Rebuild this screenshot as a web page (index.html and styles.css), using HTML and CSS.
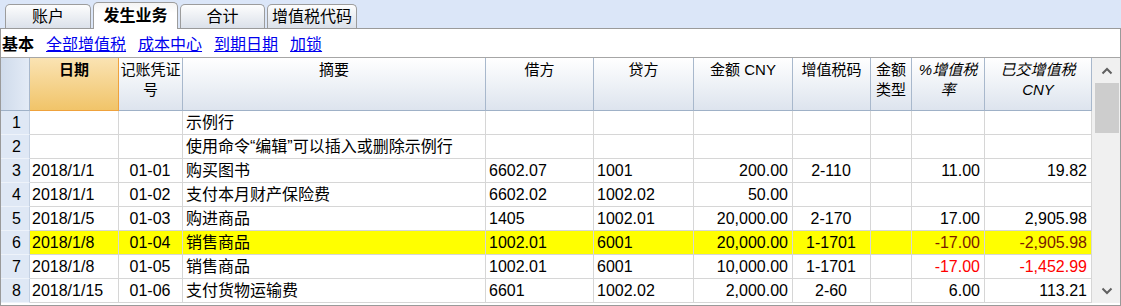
FILE: index.html
```html
<!DOCTYPE html>
<html lang="zh">
<head>
  <meta charset="UTF-8" />
  <title>发生业务</title>
  <link rel="stylesheet" href="styles.css">
</head>
<body>
  <div class="tabbar">
    <div class="tab tab-1">账户</div>
    <div class="tab tab-2 active">发生业务</div>
    <div class="tab tab-3">合计</div>
    <div class="tab tab-4">增值税代码</div>
  </div>

  <div class="panel">
    <div class="toolbar">
      <b>基本</b>
      <a href="#">全部增值税</a>
      <a href="#">成本中心</a>
      <a href="#">到期日期</a>
      <a href="#">加锁</a>
    </div>

    <div class="gridbox">
      <table class="grid">
        <thead>
          <tr>
            <th class="num w-num"></th>
            <th class="sel w-date"><b>日期</b></th>
            <th class="w-doc">记账凭证<br>号</th>
            <th class="w-desc">摘要</th>
            <th class="w-debit">借方</th>
            <th class="w-credit">贷方</th>
            <th class="w-amount">金额 CNY</th>
            <th class="w-code">增值税码</th>
            <th class="w-type">金额<br>类型</th>
            <th class="w-rate"><i>%增值税<br>率</i></th>
            <th class="w-vat"><i>已交增值税<br>CNY</i></th>
          </tr>
        </thead>
        <tbody>
          <tr>
            <td class="num">1</td><td></td><td></td><td>示例行</td>
            <td></td><td></td><td></td><td></td><td></td><td></td><td></td>
          </tr>
          <tr>
            <td class="num">2</td><td></td><td></td><td>使用命令“编辑”可以插入或删除示例行</td>
            <td></td><td></td><td></td><td></td><td></td><td></td><td></td>
          </tr>
          <tr>
            <td class="num">3</td><td>2018/1/1</td><td class="c">01-01</td><td>购买图书</td>
            <td>6602.07</td><td>1001</td><td class="r">200.00</td><td class="c">2-110</td><td></td>
            <td class="r">11.00</td><td class="r">19.82</td>
          </tr>
          <tr>
            <td class="num">4</td><td>2018/1/1</td><td class="c">01-02</td><td>支付本月财产保险费</td>
            <td>6602.02</td><td>1002.02</td><td class="r">50.00</td><td></td><td></td>
            <td></td><td></td>
          </tr>
          <tr>
            <td class="num">5</td><td>2018/1/5</td><td class="c">01-03</td><td>购进商品</td>
            <td>1405</td><td>1002.01</td><td class="r">20,000.00</td><td class="c">2-170</td><td></td>
            <td class="r">17.00</td><td class="r">2,905.98</td>
          </tr>
          <tr class="current">
            <td class="num">6</td><td>2018/1/8</td><td class="c">01-04</td><td>销售商品</td>
            <td>1002.01</td><td>6001</td><td class="r">20,000.00</td><td class="c">1-1701</td><td></td>
            <td class="r neg">-17.00</td><td class="r neg">-2,905.98</td>
          </tr>
          <tr>
            <td class="num">7</td><td>2018/1/8</td><td class="c">01-05</td><td>销售商品</td>
            <td>1002.01</td><td>6001</td><td class="r">10,000.00</td><td class="c">1-1701</td><td></td>
            <td class="r neg">-17.00</td><td class="r neg">-1,452.99</td>
          </tr>
          <tr>
            <td class="num">8</td><td>2018/1/15</td><td class="c">01-06</td><td>支付货物运输费</td>
            <td>6601</td><td>1002.02</td><td class="r">2,000.00</td><td class="c">2-60</td><td></td>
            <td class="r">6.00</td><td class="r">113.21</td>
          </tr>
        </tbody>
      </table>

      <div class="vscroll">
        <div class="arrow">
          <svg width="12" height="8" viewBox="0 0 12 8"><polyline points="1.5,6.5 6,2 10.5,6.5" fill="none" stroke="#606060" stroke-width="2"/></svg>
        </div>
        <div class="thumb"></div>
        <div class="track"></div>
        <div class="arrow">
          <svg width="12" height="8" viewBox="0 0 12 8"><polyline points="1.5,1.5 6,6 10.5,1.5" fill="none" stroke="#606060" stroke-width="2"/></svg>
        </div>
      </div>
    </div>
  </div>
</body>
</html>
```

FILE: styles.css
```css
* {
  box-sizing: border-box;
}
body {
  margin: 0;
  width: 1121px;
  height: 306px;
  overflow: hidden;
  background: #fff;
  color: #000;
  font-family: "Liberation Sans", "Noto Sans CJK SC", sans-serif;
  font-size: 16px;
}

/* tabs */
.tabbar {
  height: 28px;
  background: #dbe6f8;
  display: flex;
  align-items: flex-end;
  gap: 2px;
  padding-left: 5px;
}
.tab {
  height: 24px;
  border: 1px solid #9c9c9c;
  border-bottom: none;
  border-radius: 5px 5px 0 0;
  background: linear-gradient(#fdfdfd, #dbe1ea);
  text-align: center;
  line-height: 23px;
}
.tab-1 { width: 86px; }
.tab-2 { width: 85px; }
.tab-3 { width: 85px; }
.tab-4 { width: 90px; }
.tab.active {
  height: 27px;
  margin-bottom: -1px;
  position: relative;
  z-index: 1;
  background: linear-gradient(#f4f4f4, #ffffff 40%);
  font-weight: bold;
  line-height: 25px;
}

/* panel */
.panel {
  height: 278px;
  border: 1px solid #9a9a9a;
  display: flex;
  flex-direction: column;
}
.toolbar {
  height: 28px;
  display: flex;
  align-items: center;
  gap: 12px;
  padding-left: 1px;
}
.toolbar a {
  color: #0000ee;
  text-decoration: underline;
}

.gridbox {
  display: flex;
  border-top: 1px solid #a6a6a6;
}

/* grid */
.grid {
  width: 1091px;
  table-layout: fixed;
  border-collapse: separate;
  border-spacing: 0;
}
.grid th,
.grid td {
  border-right: 1px solid #d6d6d6;
  border-bottom: 1px solid #d6d6d6;
  white-space: nowrap;
  overflow: hidden;
}
.grid th {
  height: 53px;
  padding: 2px 0 0;
  vertical-align: top;
  font-size: 15px;
  font-weight: normal;
  line-height: 20px;
  text-align: center;
  background: linear-gradient(#ffffff, #dde4ee);
  border-right-color: #a8b8cc;
  border-bottom-color: #9fb1c7;
}
.grid th.sel {
  background: linear-gradient(#fae3b3, #f1c469);
  border-right-color: #efa23c;
  border-bottom-color: #efa23c;
}
.grid th.num {
  background: linear-gradient(90deg, #cfdbeb, #e3ebf6);
}
.grid td {
  height: 24px;
  padding: 0 4px 0 3px;
  line-height: 23px;
}
.grid td:nth-child(2) {
  padding-left: 2px;
}
.grid td.num {
  padding-left: 11px;
  background: #dfe8f5;
  border-right-color: #c3d0e2;
  border-bottom-color: #eef3fa;
}
.grid td.c { text-align: center; }
.grid td.r { text-align: right; }
.grid td.neg { color: #ff0000; }

.grid tr.current td:not(.num) {
  background: #ffff00;
}
.grid tr.current td.neg {
  color: #7a1a00;
}

.w-num { width: 29px; }
.w-date { width: 89px; }
.w-doc { width: 64px; }
.w-desc { width: 303px; }
.w-debit { width: 108px; }
.w-credit { width: 100px; }
.w-amount { width: 99px; }
.w-code { width: 78px; }
.w-type { width: 41px; }
.w-rate { width: 73px; }
.w-vat { width: 107px; }

/* scrollbar */
.vscroll {
  width: 28px;
  height: 245px;
  background: #f0f0f0;
  display: flex;
  flex-direction: column;
  align-items: center;
}
.arrow {
  height: 25px;
  width: 100%;
  display: flex;
  align-items: center;
  justify-content: center;
  padding-left: 1px;
}
.thumb {
  width: 24px;
  height: 50px;
  margin-left: 1px;
  background: #cdcdcd;
}
.track {
  flex: 1;
}
```
